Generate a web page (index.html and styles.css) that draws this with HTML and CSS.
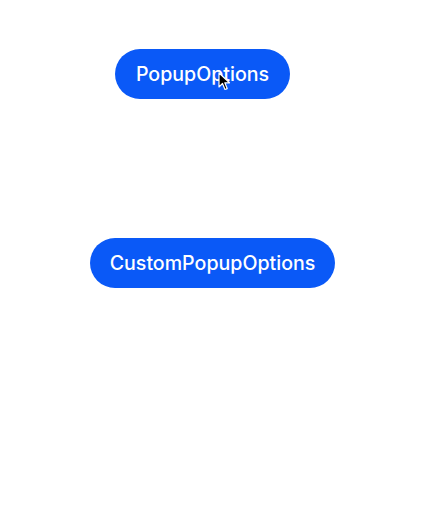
FILE: index.html
```html
<!DOCTYPE html>
<html>
<head>
<meta charset="utf-8">
<link rel="stylesheet" href="styles.css">
</head>
<body>
<div class="page">
  <div class="row row-first">
    <button class="btn btn-popup">PopupOptions</button>
    <svg class="cursor" width="13" height="19" viewBox="0 0 13 19">
      <path d="M1 1 L1 15 L4.5 11.5 L7 17.5 L9.2 16.6 L6.8 10.8 L11.5 10.8 Z" fill="#000" stroke="#fff" stroke-width="1.2" stroke-linejoin="round"/>
    </svg>
  </div>
  <div class="row row-second">
    <button class="btn btn-custom">CustomPopupOptions</button>
  </div>
</div>
</body>
</html>
```

FILE: styles.css
```css
html, body {
  margin: 0;
  padding: 0;
  background: #ffffff;
}
.page {
  width: 431px;
  height: 511px;
  display: flex;
  flex-direction: column;
  padding-top: 49px;
  box-sizing: border-box;
}
.row {
  position: relative;
  display: flex;
}
.row-first {
  padding-left: 115px;
}
.row-second {
  padding-left: 90px;
  margin-top: 139px;
}
.btn {
  height: 50px;
  border: none;
  border-radius: 25px;
  background: #0a59f7;
  color: #ffffff;
  font-family: "Inter", "Noto Sans", sans-serif;
  font-size: 19.6px;
  font-weight: 500;
  padding: 0;
  display: flex;
  align-items: center;
  justify-content: center;
}
.btn-popup {
  width: 175px;
}
.btn-custom {
  width: 245px;
}
.cursor {
  position: absolute;
  left: 218px;
  top: 23px;
}
```
